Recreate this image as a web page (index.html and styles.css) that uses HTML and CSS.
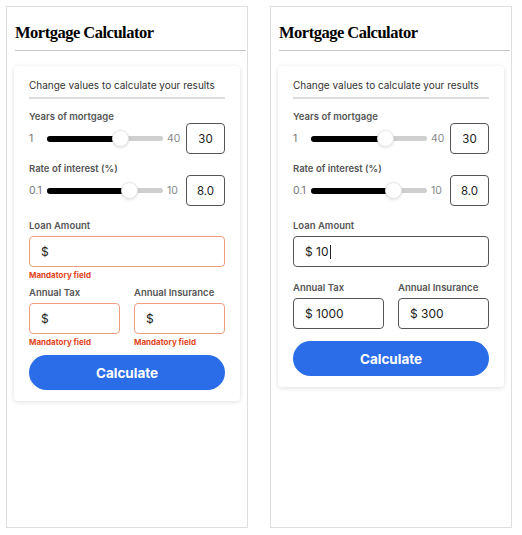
FILE: index.html
```html
<!DOCTYPE html>
<html>
<head>
<meta charset="utf-8">
<link rel="stylesheet" href="styles.css">
</head>
<body>
<div class="page">
  <section class="panel">
    <h1 class="title">Mortgage Calculator</h1>
    <div class="card">
      <p class="intro">Change values to calculate your results</p>
      <div class="slider-group">
        <div class="label slim">Years of mortgage</div>
        <div class="slider-row">
          <span class="min">1</span>
          <div class="track"><div class="fill" style="width:73px"></div><div class="thumb" style="left:73px"></div></div>
          <span class="max">40</span>
          <div class="box">30</div>
        </div>
      </div>
      <div class="slider-group">
        <div class="label slim">Rate of interest (%)</div>
        <div class="slider-row">
          <span class="min">0.1</span>
          <div class="track"><div class="fill" style="width:82px"></div><div class="thumb" style="left:82px"></div></div>
          <span class="max">10</span>
          <div class="box">8.0</div>
        </div>
      </div>
      <div class="field loan has-error">
        <div class="label">Loan Amount</div>
        <div class="input error-input">$</div>
        <div class="error">Mandatory field</div>
      </div>
      <div class="pair with-errors">
        <div class="field has-error">
          <div class="label">Annual Tax</div>
          <div class="input error-input">$</div>
          <div class="error">Mandatory field</div>
        </div>
        <div class="field has-error">
          <div class="label">Annual Insurance</div>
          <div class="input error-input">$</div>
          <div class="error">Mandatory field</div>
        </div>
      </div>
      <button class="calc">Calculate</button>
    </div>
  </section>
  <section class="panel">
    <h1 class="title">Mortgage Calculator</h1>
    <div class="card">
      <p class="intro">Change values to calculate your results</p>
      <div class="slider-group">
        <div class="label slim">Years of mortgage</div>
        <div class="slider-row">
          <span class="min">1</span>
          <div class="track"><div class="fill" style="width:74px"></div><div class="thumb" style="left:74px"></div></div>
          <span class="max">40</span>
          <div class="box">30</div>
        </div>
      </div>
      <div class="slider-group">
        <div class="label slim">Rate of interest (%)</div>
        <div class="slider-row">
          <span class="min">0.1</span>
          <div class="track"><div class="fill" style="width:82px"></div><div class="thumb" style="left:82px"></div></div>
          <span class="max">10</span>
          <div class="box">8.0</div>
        </div>
      </div>
      <div class="field loan">
        <div class="label">Loan Amount</div>
        <div class="input">$ 10<span class="caret"></span></div>
      </div>
      <div class="pair">
        <div class="field">
          <div class="label">Annual Tax</div>
          <div class="input">$ 1000</div>
        </div>
        <div class="field">
          <div class="label">Annual Insurance</div>
          <div class="input">$ 300</div>
        </div>
      </div>
      <button class="calc">Calculate</button>
    </div>
  </section>
</div>
</body>
</html>
```
FILE: styles.css
```css
* { box-sizing: border-box; }
html, body { margin: 0; padding: 0; background: #fff; }
body { font-family: "Inter", "Liberation Sans", sans-serif; color: #222; }

.page {
  display: flex;
  gap: 22px;
  padding: 6px 0 0 6px;
  width: 522px;
  height: 535px;
}

.panel {
  width: 242px;
  height: 522px;
  border: 1px solid #dedede;
  padding: 0 1px 0 8px;
}

.title {
  margin: 0;
  font-family: "Liberation Serif", serif;
  font-weight: 700;
  font-size: 16.5px;
  letter-spacing: -0.5px;
  color: #000;
  height: 44px;
  line-height: 20px;
  padding-top: 16px;
  border-bottom: 1px solid #c8c8c8;
}

.card {
  margin: 15px 6px 0 -1px;
  width: 226px;
  border-radius: 4px;
  box-shadow: 0 1px 5px rgba(0,0,0,0.13);
  padding: 12px 15px 11px 15px;
}

.intro {
  margin: 0;
  font-size: 10px;
  line-height: 14px;
  color: #333;
  padding-bottom: 5px;
  border-bottom: 2px solid #ddd;
}

.label {
  font-size: 9.5px;
  font-weight: 600;
  color: #555;
  line-height: 12px;
  margin-bottom: 4px;
}
.label.slim { margin-bottom: 0; }

.slider-group { margin-top: 12px; }
.slider-group + .slider-group { margin-top: 9px; }

.slider-row {
  display: flex;
  align-items: center;
  height: 31px;
}
.min {
  width: 18px;
  font-size: 10.5px;
  color: #777;
}
.max {
  width: 23px;
  padding-left: 4px;
  font-size: 10.5px;
  color: #888;
}
.track {
  position: relative;
  flex: 1;
  height: 5px;
  border-radius: 3px;
  background: #cfcfcf;
}
.fill {
  height: 6px;
  margin-top: -0.5px;
  border-radius: 3px;
  background: #000;
}
.thumb {
  position: absolute;
  top: 50%;
  width: 17px;
  height: 17px;
  margin: -8.5px 0 0 -8.5px;
  border-radius: 50%;
  background: #fff;
  border: 1px solid #e6e6e6;
  box-shadow: 0 1px 3px rgba(0,0,0,0.12);
}
.box {
  width: 39px;
  height: 31px;
  border: 1.5px solid #555;
  border-radius: 4px;
  display: flex;
  align-items: center;
  justify-content: center;
  font-size: 11.5px;
  color: #222;
}

.field { margin-top: 15px; }
.field.loan { margin-top: 14px; }
.pair { display: flex; gap: 14px; }
.pair .field { flex: 1; }
.has-error + .pair .field { margin-top: 7px; }

.input {
  height: 31px;
  border: 1.5px solid #555;
  border-radius: 4px;
  display: flex;
  align-items: center;
  padding-left: 11px;
  font-size: 12px;
  color: #222;
}
.input.error-input { border-color: #f19d80; }
.caret {
  display: inline-block;
  width: 1px;
  height: 14px;
  background: #222;
  margin-left: 1px;
}

.error {
  margin-top: 3px;
  font-size: 8px;
  line-height: 10px;
  font-weight: 700;
  color: #e0461c;
}

.calc {
  display: block;
  width: 100%;
  height: 35px;
  margin-top: 12px;
  border: none;
  border-radius: 18px;
  background: #2b6de8;
  color: #fff;
  font-family: "Inter", "Liberation Sans", sans-serif;
  font-size: 13.5px;
  font-weight: 700;
}
.with-errors + .calc { margin-top: 8px; }
```
